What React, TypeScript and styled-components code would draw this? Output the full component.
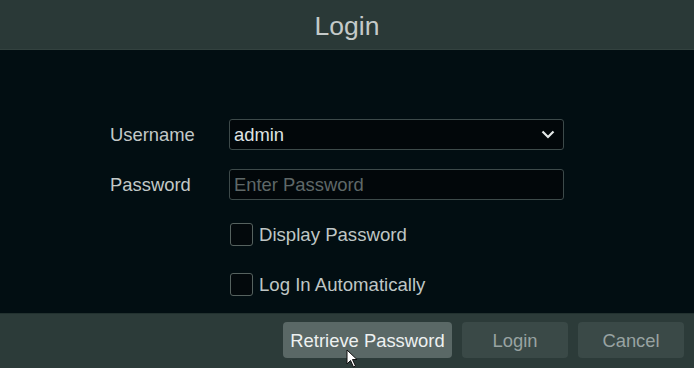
import React from "react";
import styled, { createGlobalStyle } from "styled-components";

const Global = createGlobalStyle`
  html, body { margin: 0; padding: 0; background: #020e12; }
  body { font-family: "Liberation Sans", Arial, sans-serif; }
  * { box-sizing: border-box; }
`;

const Page = styled.div`
  width: 694px;
  height: 368px;
  display: flex;
  flex-direction: column;
  position: relative;
  overflow: hidden;
`;

const Header = styled.div`
  height: 50px;
  background: #2a3937;
  border-bottom: 1px solid #33423f;
  display: flex;
  align-items: center;
  justify-content: center;
  padding-top: 4px;
  color: #c4cac9;
  font-size: 26.5px;
`;

const Body = styled.div`
  flex: 1;
  background: #020e12;
  padding: 69px 0 0 110px;
`;

const Form = styled.div`
  display: grid;
  grid-template-columns: 119px 335px;
  grid-auto-rows: 30px;
  row-gap: 20px;
  align-items: center;
`;

const Label = styled.div`
  color: #c3c9c8;
  font-size: 18.4px;
  padding-top: 2px;
`;

const Field = styled.div`
  height: 31px;
  border: 1px solid #3d4a4a;
  border-radius: 3px;
  background: #02070a;
  display: flex;
  align-items: center;
  justify-content: space-between;
  padding: 2px 8px 0 4px;
  font-size: 18.4px;
`;

const Value = styled.span<{ $placeholder?: boolean }>`
  color: ${(p) => (p.$placeholder ? "#5f6868" : "#dfe3e3")};
`;

const CheckRow = styled.label`
  grid-column: 2;
  display: flex;
  align-items: center;
  gap: 6px;
  color: #bfc6c5;
  font-size: 18.6px;
  padding-top: 2px;
`;

const Box = styled.span`
  width: 23px;
  height: 23px;
  border: 1.5px solid #56625f;
  border-radius: 3px;
  background: #03090c;
  margin-left: 1px;
  margin-top: -2px;
`;

const Footer = styled.div`
  height: 55px;
  background: #2c3b39;
  border-top: 1px solid #22312f;
  display: flex;
  align-items: center;
  justify-content: flex-end;
  gap: 10px;
  padding: 0 10px 2px 0;
`;

const Button = styled.button<{ $active?: boolean; $w: number }>`
  width: ${(p) => p.$w}px;
  height: 36px;
  border: none;
  border-radius: 4px;
  background: ${(p) => (p.$active ? "#5a6866" : "#3a4947")};
  color: ${(p) => (p.$active ? "#eef1f1" : "#98a3a2")};
  font-family: "Liberation Sans", Arial, sans-serif;
  font-size: 18.4px;
  padding: 2px 0 0;
`;

const Cursor = styled.svg`
  position: absolute;
  left: 346px;
  top: 349px;
`;

export default function App() {
  return (
    <Page>
      <Global />
      <Header>Login</Header>
      <Body>
        <Form>
          <Label>Username</Label>
          <Field>
            <Value>admin</Value>
            <svg width="14" height="9" viewBox="0 0 14 9" style={{ marginTop: -2 }}>
              <path d="M1.5 1.5 L7 7 L12.5 1.5" fill="none" stroke="#e4e8e8" strokeWidth="2.2" />
            </svg>
          </Field>
          <Label>Password</Label>
          <Field>
            <Value $placeholder>Enter Password</Value>
          </Field>
          <CheckRow>
            <Box />
            Display Password
          </CheckRow>
          <CheckRow>
            <Box />
            Log In Automatically
          </CheckRow>
        </Form>
      </Body>
      <Footer>
        <Button $active $w={169}>Retrieve Password</Button>
        <Button $w={106}>Login</Button>
        <Button $w={106}>Cancel</Button>
      </Footer>
      <Cursor width="14" height="20" viewBox="0 0 14 20">
        <path d="M1 1 L1 15 L4.5 11.5 L7.5 18 L9.5 17 L6.5 10.5 L11 10.5 Z" fill="#ffffff" stroke="#111" strokeWidth="1" />
      </Cursor>
    </Page>
  );
}
